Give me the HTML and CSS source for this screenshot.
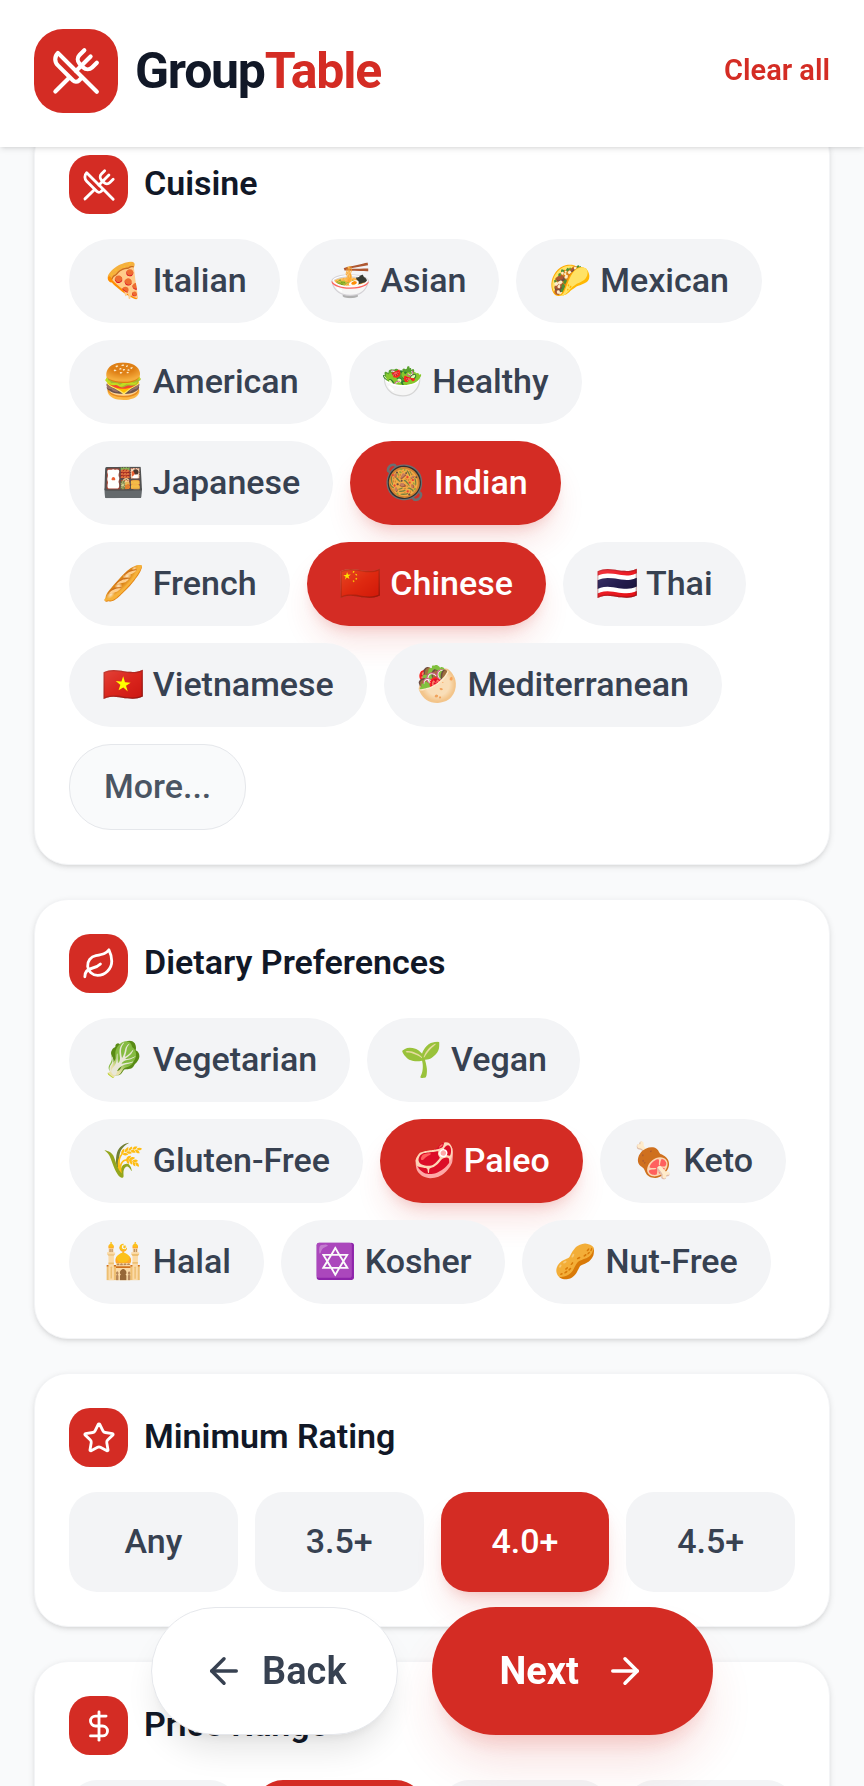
FILE: index.html
```html
<!DOCTYPE html>
<html lang="en">
<head>
  <meta charset="UTF-8" />
  <meta name="viewport" content="width=device-width, initial-scale=1" />
  <title>GroupTable</title>
  <link rel="stylesheet" href="styles.css">
</head>
<body>

  <!-- Shared icons -->
  <svg class="icon-defs" aria-hidden="true">
    <symbol id="utensils" viewBox="0 0 24 24">
      <path d="m16 2-2.3 2.3a3 3 0 0 0 0 4.2l1.8 1.8a3 3 0 0 0 4.2 0L22 8" />
      <path d="M15 15 3.3 3.3a4.2 4.2 0 0 0 0 6l7.3 7.3c.7.7 2 .7 2.8 0L15 15Zm0 0 7 7" />
      <path d="m2.1 21.8 6.4-6.3" />
      <path d="m19 5-7 7" />
    </symbol>
  </svg>

  <header class="header">
    <div class="brand">
      <div class="logo"><svg class="icon"><use href="#utensils" /></svg></div>
      <h1>Group<span>Table</span></h1>
    </div>
    <button type="button" class="clear-btn">Clear all</button>
  </header>

  <main class="content">
    <section class="card">
      <div class="card-title">
        <div class="badge"><svg class="icon"><use href="#utensils" /></svg></div>
        <h2>Cuisine</h2>
      </div>
      <div class="chips">
        <button type="button" class="chip">🍕 Italian</button>
        <button type="button" class="chip">🍜 Asian</button>
        <button type="button" class="chip">🌮 Mexican</button>
        <button type="button" class="chip">🍔 American</button>
        <button type="button" class="chip">🥗 Healthy</button>
        <button type="button" class="chip">🍱 Japanese</button>
        <button type="button" class="chip selected" aria-pressed="true">🥘 Indian</button>
        <button type="button" class="chip">🥖 French</button>
        <button type="button" class="chip selected" aria-pressed="true">🇨🇳 Chinese</button>
        <button type="button" class="chip">🇹🇭 Thai</button>
        <button type="button" class="chip">🇻🇳 Vietnamese</button>
        <button type="button" class="chip">🥙 Mediterranean</button>
        <button type="button" class="chip more">More...</button>
      </div>
    </section>

    <section class="card">
      <div class="card-title">
        <div class="badge">
          <svg class="icon" viewBox="0 0 24 24">
            <path d="M11 20A7 7 0 0 1 9.8 6.1C15.5 5 17 4.48 19 2c1 2 2 4.18 2 8 0 5.5-4.78 10-10 10Z" />
            <path d="M2 21c0-3 1.85-5.36 5.08-6C9.5 14.52 12 13 13 12" />
          </svg>
        </div>
        <h2>Dietary Preferences</h2>
      </div>
      <div class="chips">
        <button type="button" class="chip">🥬 Vegetarian</button>
        <button type="button" class="chip">🌱 Vegan</button>
        <button type="button" class="chip">🌾 Gluten-Free</button>
        <button type="button" class="chip selected" aria-pressed="true">🥩 Paleo</button>
        <button type="button" class="chip">🍖 Keto</button>
        <button type="button" class="chip">🕌 Halal</button>
        <button type="button" class="chip">✡️ Kosher</button>
        <button type="button" class="chip">🥜 Nut-Free</button>
      </div>
    </section>

    <section class="card">
      <div class="card-title">
        <div class="badge">
          <svg class="icon" viewBox="0 0 24 24">
            <path d="M11.525 2.295a.53.53 0 0 1 .95 0l2.31 4.679a2.123 2.123 0 0 0 1.595 1.16l5.166.756a.53.53 0 0 1 .294.904l-3.736 3.638a2.123 2.123 0 0 0-.611 1.878l.882 5.14a.53.53 0 0 1-.771.56l-4.618-2.428a2.122 2.122 0 0 0-1.973 0L6.396 21.01a.53.53 0 0 1-.77-.56l.881-5.139a2.122 2.122 0 0 0-.611-1.879L2.16 9.795a.53.53 0 0 1 .294-.906l5.165-.755a2.122 2.122 0 0 0 1.597-1.16z" />
          </svg>
        </div>
        <h2>Minimum Rating</h2>
      </div>
      <div class="options">
        <button type="button" class="option">Any</button>
        <button type="button" class="option">3.5+</button>
        <button type="button" class="option selected" aria-pressed="true">4.0+</button>
        <button type="button" class="option">4.5+</button>
      </div>
    </section>

    <section class="card">
      <div class="card-title">
        <div class="badge">
          <svg class="icon" viewBox="0 0 24 24">
            <path d="M12 2v20" />
            <path d="M17 5H9.5a3.5 3.5 0 0 0 0 7h5a3.5 3.5 0 0 1 0 7H6" />
          </svg>
        </div>
        <h2>Price Range</h2>
      </div>
      <div class="options">
        <button type="button" class="option" aria-label="$"></button>
        <button type="button" class="option selected" aria-pressed="true" aria-label="$$"></button>
        <button type="button" class="option" aria-label="$$$"></button>
        <button type="button" class="option" aria-label="$$$$"></button>
      </div>
    </section>
  </main>

  <!-- Floating navigation -->
  <nav class="actions">
    <button type="button" class="back-btn">
      <svg class="icon" viewBox="0 0 24 24"><path d="m12 19-7-7 7-7" /><path d="M19 12H5" /></svg>
      Back
    </button>
    <button type="button" class="next-btn">
      Next
      <svg class="icon" viewBox="0 0 24 24"><path d="M5 12h14" /><path d="m12 5 7 7-7 7" /></svg>
    </button>
  </nav>

</body>
</html>
```

FILE: styles.css
```css
* {
  margin: 0;
  padding: 0;
  box-sizing: border-box;
}

body {
  height: 100vh;
  overflow: hidden;
  background: #f9fafb;
  color: #111827;
  font-family: Roboto, "Noto Color Emoji", sans-serif;
  font-size: 34px;
  line-height: 50px;
}

button {
  border: none;
  background: none;
  font: inherit;
  font-weight: 500;
  cursor: pointer;
}

.icon-defs {
  position: absolute;
  width: 0;
  height: 0;
}

.icon {
  width: 34px;
  height: 34px;
  fill: none;
  stroke: currentColor;
  stroke-width: 2;
  stroke-linecap: round;
  stroke-linejoin: round;
}

/* Header */
.header {
  position: fixed;
  top: 0;
  left: 0;
  right: 0;
  z-index: 10;
  display: flex;
  align-items: center;
  justify-content: space-between;
  padding: 29px 34px 34px;
  background: #fff;
  box-shadow: 0 2px 6px rgba(0, 0, 0, 0.1), 0 2px 4px -2px rgba(0, 0, 0, 0.1);
}

.brand {
  display: flex;
  align-items: center;
  gap: 17px;
}

.logo {
  display: flex;
  align-items: center;
  justify-content: center;
  width: 84px;
  height: 84px;
  border-radius: 29px;
  background: #d42c24;
  color: #fff;
}

.logo .icon {
  width: 50px;
  height: 50px;
}

h1 {
  font-size: 50px;
  font-weight: 700;
  letter-spacing: -0.025em;
}

h1 span {
  color: #d42c24;
}

.clear-btn {
  padding-bottom: 2px;
  color: #d42c24;
  font-size: 29px;
  font-weight: 600;
}

/* Cards */
.content {
  display: flex;
  flex-direction: column;
  gap: 34px;
  height: 100%;
  padding: 120px 34px 0;
  overflow: hidden;
}

.card {
  flex-shrink: 0;
  padding: 34px;
  background: #fff;
  border: 1px solid #f3f4f6;
  border-radius: 34px;
  box-shadow: 0 2px 6px rgba(0, 0, 0, 0.1), 0 2px 4px -2px rgba(0, 0, 0, 0.1);
}

.card-title {
  display: flex;
  align-items: center;
  gap: 16px;
  margin-bottom: 25px;
}

.badge {
  display: flex;
  align-items: center;
  justify-content: center;
  width: 59px;
  height: 59px;
  border-radius: 21px;
  background: #d42c24;
  color: #fff;
}

h2 {
  padding-bottom: 4px;
  font-size: 34px;
  font-weight: 600;
}

/* Chips */
.chips {
  display: flex;
  flex-wrap: wrap;
  gap: 17px;
}

.chip {
  padding: 16px 33px 18px;
  border-radius: 42px;
  background: #f3f4f6;
  color: #374151;
}

.chip.more {
  padding: 16px 34px 18px;
  border: 1px solid #e5e7eb;
  background: #f9fafb;
  color: #4b5563;
}

.options {
  display: grid;
  grid-template-columns: repeat(4, 1fr);
  gap: 17px;
}

.option {
  min-height: 100px;
  padding: 24px 0 26px;
  border-radius: 28px;
  background: #f3f4f6;
  color: #374151;
}

.chip.selected,
.option.selected {
  background: #d42c24;
  color: #fff;
  box-shadow: 0 21px 32px -6px rgba(212, 44, 36, 0.14), 0 8px 13px -6px rgba(212, 44, 36, 0.2);
}

/* Floating navigation */
.actions {
  position: fixed;
  left: 0;
  right: 0;
  bottom: 51px;
  z-index: 10;
  display: flex;
  align-items: center;
  justify-content: center;
  gap: 34px;
}

.actions button {
  display: flex;
  align-items: center;
  border-radius: 64px;
  font-size: 38px;
  font-weight: 600;
  line-height: 60px;
}

.actions .icon {
  width: 42px;
  height: 42px;
}

.actions .back-btn {
  gap: 17px;
  padding: 33px 51px;
  border: 1px solid #e5e7eb;
  background: #fff;
  color: #374151;
  box-shadow: 0 21px 32px -6px rgba(0, 0, 0, 0.1), 0 8px 13px -8px rgba(0, 0, 0, 0.1);
}

.actions .next-btn {
  gap: 25px;
  padding: 34px 67px;
  background: #d42c24;
  color: #fff;
  font-weight: 700;
  box-shadow: 0 32px 50px -8px rgba(212, 44, 36, 0.16), 0 16px 21px -12px rgba(212, 44, 36, 0.2);
}
```
